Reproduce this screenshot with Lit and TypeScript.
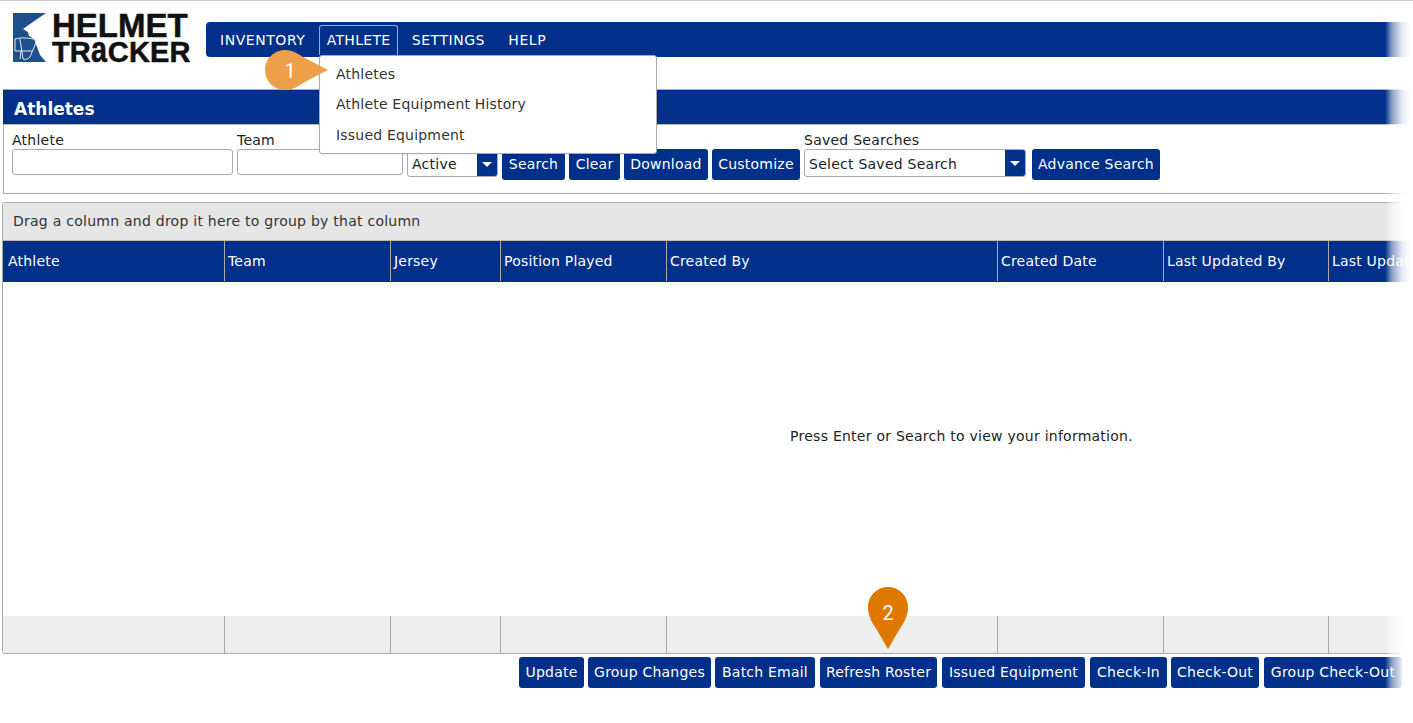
import { LitElement, html, css, svg } from "lit";
import { customElement } from "lit/decorators.js";

const COLS = ["Athlete", "Team", "Jersey", "Position Played", "Created By", "Created Date", "Last Updated By", "Last Updated Date"];

@customElement("app-root")
export class AppRoot extends LitElement {
  static styles = css`
    :host {
      display: block;
      position: relative;
      width: 1413px;
      height: 723px;
      overflow: hidden;
      background: #fff;
      font-family: "DejaVu Sans", Verdana, sans-serif;
      font-size: 14px;
      letter-spacing: 0.25px;
      color: #222;
      box-sizing: border-box;
      border-top: 1px solid #ccc;
    }
    * { box-sizing: border-box; }
    .top { display: flex; height: 88px; align-items: flex-start; }
    .logo { width: 206px; flex: none; display: flex; padding: 11px 0 0 13px; gap: 3px; }
    .logo svg { flex: none; display: block; }
    .wordmark { font-family: "Liberation Sans", Arial, sans-serif; font-weight: 700; color: #111; display: flex; flex-direction: column; letter-spacing: 0; white-space: nowrap; }
    .w1 { font-size: 33px; line-height: 27px; height: 28px; -webkit-text-stroke: 0.5px #111; }
    .w2 { font-size: 29px; line-height: 24px; height: 24px; -webkit-text-stroke: 0.5px #111; letter-spacing: 0.1px; }
    .w2 b { display: inline-block; font-size: 36px; line-height: 0; width: 17px; transform: scaleX(0.8); transform-origin: left bottom; }
    .nav {
      flex: 1; margin-top: 21px; height: 35px; background: #00308a; border-radius: 4px 0 0 4px;
      display: flex; align-items: flex-start; gap: 5.3px; padding-left: 6px; color: #fff; letter-spacing: 0.55px;
    }
    .nav .item { padding: 0 7px 2px; display: flex; align-items: center; height: 30px; margin-top: 3px; border: 1px solid transparent; border-bottom: 0; white-space: nowrap; }
    .nav .item:last-child { margin-left: 2px; }
    .nav .item.open { border-color: #aaa; border-radius: 3px 3px 0 0; letter-spacing: 0.3px; }
    .title {
      height: 35px; margin-left: 3px; background: #00308a; color: #fff; font-weight: 700; font-size: 17px; letter-spacing: 0;
      display: flex; align-items: center; padding: 3px 0 0 11px; border-top: 1px solid #aaa;
    }
    .search {
      margin-left: 3px; height: 70px; border-left: 1px solid #aaa; border-bottom: 1px solid #aaa; border-top: 1px solid #bbb;
      display: flex; gap: 4px; padding: 7px 0 0 8px; align-items: flex-start;
    }
    .field { display: flex; flex-direction: column; }
    .field label { height: 17px; line-height: 17px; }
    .w-a { width: 221px; }
    .w-t { width: 166px; }
    input.text { height: 26px; border: 1px solid #aaa; border-radius: 3px; background: #fff; display: block; }
    .dd {
      height: 26px; border: 1px solid #aaa; border-radius: 3px; display: flex; align-items: center; padding-left: 4px; overflow: hidden;
      justify-content: space-between; background: #fff; white-space: nowrap;
    }
    .dd.status { width: 91px; margin-top: 2px; }
    .dd.saved { width: 222px; height: 28px; }
    .dd.saved span:first-child { padding-top: 1px; }
    .dd .arrow { width: 20px; height: 100%; background: #00308a; display: flex; align-items: center; justify-content: center; flex: none; }
    .dd .arrow i { width: 0; height: 0; border-left: 5px solid transparent; border-right: 5px solid transparent; border-top: 5px solid #fff; }
    .btn {
      background: #00308a; color: #fff; border-radius: 3px; height: 31px; display: flex; align-items: center; justify-content: center;
      flex: none; white-space: nowrap; letter-spacing: 0.22px; padding-bottom: 2px;
    }
    .btn.wide-gap { margin-left: 1px; }
    .mt { margin-top: 17px; }
    .adv { margin: 17px 0 0 2px; }
    .grid {
      margin: 8px 0 0 2px; height: 452px; border: 1px solid #aaa; border-radius: 3px 0 0 3px; border-right: 0;
      display: flex; flex-direction: column;
    }
    .group { height: 38px; background: #e6e6e6; border-bottom: 1px solid #bbb; display: flex; align-items: center; padding: 0 0 2px 10px; white-space: nowrap; color: #333; }
    .row { display: grid; grid-template-columns: 222px 166px 110px 166px 331px 166px 165px 1fr; }
    .head { height: 41px; background: #00308a; color: #fff; }
    .head div { display: flex; align-items: center; padding-left: 3px; border-right: 1px solid #aaa; white-space: nowrap; overflow: hidden; margin-bottom: 1px; letter-spacing: 0.2px; }
    .head div:first-child { padding-left: 5px; }
    .head div:last-child { border-right: 0; }
    .body { flex: 1; display: flex; align-items: center; justify-content: center; padding: 0 0 27px 507px; }
    .foot { height: 37px; background: #eee; }
    .foot div { border-right: 1px solid #aaa; }
    .foot div:last-child { border-right: 0; }
    .actions { display: flex; justify-content: flex-end; gap: 4px; padding: 3px 11px 0 0; }
    .fade {
      position: absolute; top: 0; right: 0; bottom: 0; width: 28px;
      background: linear-gradient(to right, rgba(255,255,255,0), rgba(255,255,255,.55) 25%, rgba(255,255,255,.9) 60%, #fff 90%);
    }
    .menu {
      position: absolute; left: 319px; top: 54px; width: 338px; height: 99px; background: #fff; border: 1px solid #aaa; border-radius: 3px;
      display: flex; flex-direction: column; padding-top: 3px; box-shadow: 0 1px 2px rgba(0,0,0,.08);
    }
    .menu div { height: 30px; display: flex; align-items: center; padding-left: 16px; color: #333; letter-spacing: 0.2px; }
    .menu div:last-child { margin-top: 1px; }
    .pin { position: absolute; display: block; }
    .pin-label { position: absolute; font-family: Roboto, Arial, sans-serif; font-size: 20px; color: #fff; width: 20px; text-align: center; line-height: 24px; letter-spacing: 0; }
    .p1 { left: 264px; top: 48px; }
    .p2 { left: 867px; top: 585px; }
    .l1 { left: 280px; top: 58px; }
    .l2 { left: 878px; top: 600px; }
  `;

  private widths: [string, number, boolean][] = [
    ["Update", 65, false], ["Group Changes", 123, false], ["Batch Email", 100, false], ["Refresh Roster", 117, true],
    ["Issued Equipment", 143, true], ["Check-In", 77, true], ["Check-Out", 88, false], ["Group Check-Out", 138, true],
  ];

  private logo() {
    return svg`<svg width="36" height="52" viewBox="0 0 36 52">
      <path d="M0 1H33L17 12L10 17L15 20L16 24L21 27L24 35L27 43L33 50H0Z" fill="#1d4f8c"/>
      <path d="M2 27C9 25 17 26 24 28M2 27L2 39H19M7 27L10 47C13 48 15 47 17 45L24 28M8 39L7 47" fill="none" stroke="#e4ebf3" stroke-width="1"/>
    </svg>`;
  }

  render() {
    return html`
      <div class="top">
        <div class="logo">
          ${this.logo()}
          <div class="wordmark"><span class="w1">HELMET</span><span class="w2">TR<b>a</b>CKER</span></div>
        </div>
        <div class="nav">
          <div class="item">INVENTORY</div>
          <div class="item open">ATHLETE</div>
          <div class="item">SETTINGS</div>
          <div class="item">HELP</div>
        </div>
      </div>
      <div class="title">Athletes</div>
      <div class="search">
        <div class="field"><label>Athlete</label><input class="text w-a" /></div>
        <div class="field"><label>Team</label><input class="text w-t" /></div>
        <div class="field"><label></label><div class="dd status"><span>Active</span><span class="arrow"><i></i></span></div></div>
        <div class="btn mt" style="width:63px">Search</div>
        <div class="btn mt" style="width:51px">Clear</div>
        <div class="btn mt" style="width:84px">Download</div>
        <div class="btn mt" style="width:88px">Customize</div>
        <div class="field"><label>Saved Searches</label><div class="dd saved"><span>Select Saved Search</span><span class="arrow"><i></i></span></div></div>
        <div class="btn adv" style="width:128px">Advance Search</div>
      </div>
      <div class="grid">
        <div class="group">Drag a column and drop it here to group by that column</div>
        <div class="row head">${COLS.map((c) => html`<div>${c}</div>`)}</div>
        <div class="body">Press Enter or Search to view your information.</div>
        <div class="row foot">${COLS.map(() => html`<div></div>`)}</div>
      </div>
      <div class="actions">
        ${this.widths.map(([t, w, g]) => html`<div class="btn ${g ? "wide-gap" : ""}" style="width:${w}px">${t}</div>`)}
      </div>
      <div class="fade"></div>
      <div class="menu"><div>Athletes</div><div>Athlete Equipment History</div><div>Issued Equipment</div></div>
      <svg class="pin p1" width="66" height="42" viewBox="0 0 66 42">
        <path d="M21 1C28 1 33 4 39 8L64 21L39 34C33 38 28 41 21 41C10 41 1 32 1 21C1 10 10 1 21 1Z" fill="#ee9f4a"/>
      </svg>
      <span class="pin-label l1">1</span>
      <svg class="pin p2" width="42" height="64" viewBox="0 0 42 64">
        <path d="M21 1C32 1 41 10 41 21C41 30 37 37 32 44L21 63L10 44C5 37 1 30 1 21C1 10 10 1 21 1Z" fill="#df7800"/>
      </svg>
      <span class="pin-label l2">2</span>
    `;
  }
}
